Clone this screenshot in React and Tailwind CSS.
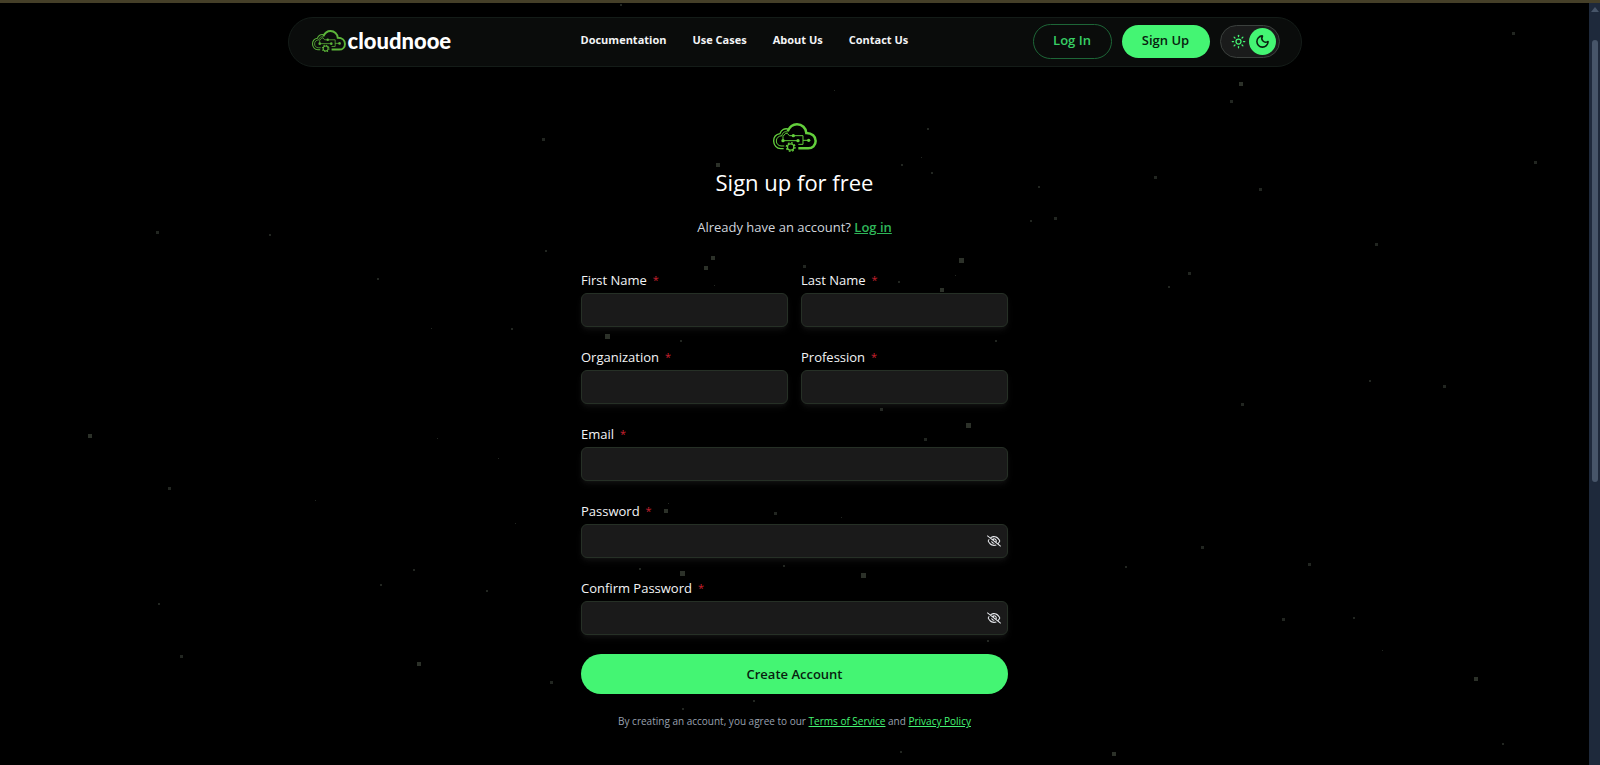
import { useState } from 'react';
import { Moon, Sun } from 'lucide-react';
import { FaRegEyeSlash } from 'react-icons/fa6';

// x, y, size
const particles = [
  [621, 5, 2], [1513, 33, 3], [1241, 84, 4], [1231, 101, 3], [834, 90, 1], [543, 139, 3],
  [1535, 162, 3], [718, 165, 4], [928, 129, 2], [932, 173, 2], [902, 165, 2], [921, 157, 1],
  [1039, 187, 2], [1155, 177, 3], [1260, 189, 3], [1055, 218, 3], [1031, 221, 2], [1376, 244, 3],
  [157, 232, 3], [270, 235, 2], [546, 251, 2], [378, 279, 2], [713, 258, 4], [706, 268, 4],
  [961, 260, 5], [955, 275, 1], [942, 290, 4], [899, 282, 2], [804, 266, 3], [714, 285, 1],
  [1189, 273, 3], [1169, 287, 2], [607, 336, 5], [681, 341, 2], [431, 328, 1], [512, 329, 2],
  [996, 341, 2], [1370, 381, 2], [1444, 386, 3], [1242, 404, 3], [881, 409, 3], [968, 425, 5],
  [925, 439, 3], [90, 436, 4], [437, 438, 1], [498, 458, 1], [169, 488, 3], [315, 500, 1],
  [515, 523, 1], [666, 511, 4], [668, 503, 1], [775, 513, 3], [841, 517, 1], [1202, 547, 3],
  [1309, 564, 3], [1126, 567, 2], [682, 573, 5], [863, 575, 5], [640, 569, 2], [784, 566, 2],
  [414, 570, 2], [381, 585, 2], [487, 591, 2], [159, 604, 2], [1283, 619, 3], [1354, 618, 2],
  [1382, 650, 1], [181, 656, 3], [419, 664, 4], [551, 682, 3], [988, 641, 2], [1476, 679, 4],
  [683, 709, 2], [754, 701, 2], [1503, 744, 2], [1114, 754, 4], [901, 752, 2],
];

const navLinks = ['Documentation', 'Use Cases', 'About Us', 'Contact Us'];

const CloudLogo = ({ className }) => (
  <svg viewBox="0 0 132 88" className={className} fill="none" stroke="currentColor" aria-hidden="true">
    <path d="M44 25C50 11 60 4 72 4c15 0 27 11 28 26 17 0 28 10 28 24 0 13-10 22-22 22H76" strokeWidth="7.5" />
    <path d="M48 19c-12-5-24 1-27 13C9 34 2 43 2 54c0 12 9 23 21 23h9" strokeWidth="4" />
    <path d="M44 27c-9-3-16 2-17 11C16 39 10 45 10 54c0 9 6 14 14 15h10" strokeWidth="3" />
    <path d="M30 53h45M30 50V40l8-9h5l6 7h9M64 38h26v26H76M90 52h15" strokeWidth="3" />
    <g fill="currentColor" stroke="none">
      <circle cx="30" cy="53" r="5" />
      <circle cx="75" cy="53" r="5" />
      <circle cx="61" cy="38" r="5" />
      <circle cx="107" cy="52" r="5" />
    </g>
    <circle cx="53" cy="72" r="13" strokeWidth="4" strokeDasharray="5.1 5.1" />
    <circle cx="53" cy="72" r="9.5" strokeWidth="4" />
  </svg>
);

const Field = ({ id, label, type = 'text', className = '' }) => {
  const [visible, setVisible] = useState(false);
  const isPassword = type === 'password';

  return (
    <div className={className}>
      <label htmlFor={id} className="flex h-5 items-center text-[13px] text-gray-100">
        {label}
        <span className="ml-[6px] text-[11px] text-[#c9202f]">*</span>
      </label>
      <div className="relative mt-[3px]">
        <input
          id={id}
          type={isPassword && visible ? 'text' : type}
          className="block h-[34px] w-full rounded-md border border-[#263026] bg-[#1a1a1a] px-3 text-sm text-white shadow-md shadow-white/5 outline-none focus:border-[#44f573]"
        />
        {isPassword && (
          <button
            type="button"
            aria-label="Toggle password visibility"
            onClick={() => setVisible(!visible)}
            className="absolute inset-y-0 right-[7px] text-[14px] text-gray-200"
          >
            <FaRegEyeSlash />
          </button>
        )}
      </div>
    </div>
  );
};

const Navbar = () => (
  <header className="mx-auto mt-[14px] flex h-[50px] w-full max-w-[1014px] items-center rounded-full border border-[#141c18] bg-[#0a0c0b] pr-[21px] pl-[23px]">
    <a href="#" className="flex w-[269px] items-center gap-[2px] pb-[2px]">
      <CloudLogo className="w-[34px] text-[#5cb53a]" />
      <span className="font-['Lato',sans-serif] text-[22px] leading-6 font-black text-white">cloudnooe</span>
    </a>
    <nav className="flex flex-1 gap-[26px] pb-1">
      {navLinks.map((link) => (
        <a key={link} href="#" className="text-[11px] leading-5 font-bold text-gray-100">{link}</a>
      ))}
    </nav>
    <div className="flex items-center gap-[10px] pb-[2px]">
      <button type="button" className="h-[35px] w-[79px] rounded-full border border-[#1d6637] text-[13px] font-semibold text-[#38cf65]">
        Log In
      </button>
      <button type="button" className="h-[33px] w-[88px] rounded-full bg-[#44f573] text-[13px] font-semibold text-[#08210f]">
        Sign Up
      </button>
      <button
        type="button"
        aria-label="Toggle theme"
        className="flex h-[33px] w-[60px] items-center justify-between rounded-full border border-[#3b403d] bg-[#1a1b1b] pr-[3px] pl-[10px] text-[#44f573]"
      >
        <Sun size={15} />
        <span className="flex size-[27px] items-center justify-center rounded-full bg-[#44f573] text-[#08210f]">
          <Moon size={15} strokeWidth={2.5} />
        </span>
      </button>
    </div>
  </header>
);

const SignUpForm = () => (
  <main className="mx-auto mt-14 w-full max-w-[427px] pb-7">
    <div className="flex flex-col items-center">
      <CloudLogo className="w-[44px] text-[#63cf3c]" />
      <h1 className="mt-3 text-[22px] leading-9 text-white">Sign up for free</h1>
      <p className="mt-[17px] text-[13px] leading-5 text-gray-300">
        Already have an account?{' '}
        <a href="#" className="font-semibold text-[#2fb659] underline">Log in</a>
      </p>
    </div>

    <form className="mt-[33px]" onSubmit={(e) => e.preventDefault()}>
      <div className="grid grid-cols-2 gap-x-[13px] gap-y-5">
        <Field id="firstName" label="First Name" />
        <Field id="lastName" label="Last Name" />
        <Field id="organization" label="Organization" />
        <Field id="profession" label="Profession" />
        <Field id="email" label="Email" type="email" className="col-span-2" />
        <Field id="password" label="Password" type="password" className="col-span-2" />
        <Field id="confirmPassword" label="Confirm Password" type="password" className="col-span-2" />
      </div>
      <button
        type="submit"
        className="mt-[19px] h-10 w-full rounded-full bg-[#44f573] text-[13px] font-semibold text-[#08210f]"
      >
        Create Account
      </button>
    </form>

    <p className="mt-[17px] text-center text-[10px] leading-5 text-gray-400">
      By creating an account, you agree to our{' '}
      <a href="#" className="text-[#44f573] underline">Terms of Service</a> and{' '}
      <a href="#" className="text-[#44f573] underline">Privacy Policy</a>
    </p>
  </main>
);

const App = () => {
  return (
    <div className="relative flex min-h-screen flex-col bg-black font-['Open_Sans',sans-serif]">
      <svg className="absolute inset-0 h-full w-full" aria-hidden="true">
        {particles.map(([x, y, size]) => (
          <rect
            key={`${x}-${y}`}
            x={x - Math.floor(size / 2)}
            y={y - Math.floor(size / 2)}
            width={size}
            height={size}
            fill={size > 3 ? '#2c3129' : '#222621'}
          />
        ))}
      </svg>
      <div className="relative h-[3px] bg-[#453f28]" />
      <div className="relative flex flex-1">
        <div className="flex-1">
          <Navbar />
          <SignUpForm />
        </div>
        <div className="flex w-[11px] flex-col items-center bg-[#1e293b]" aria-hidden="true">
          <svg viewBox="0 0 8 5" className="mt-1 w-2 fill-[#475569]">
            <path d="M4 0l4 5H0z" />
          </svg>
          <div className="mt-7 h-[442px] w-[6px] rounded-full bg-[#475569]" />
        </div>
      </div>
    </div>
  );
};

export default App;
